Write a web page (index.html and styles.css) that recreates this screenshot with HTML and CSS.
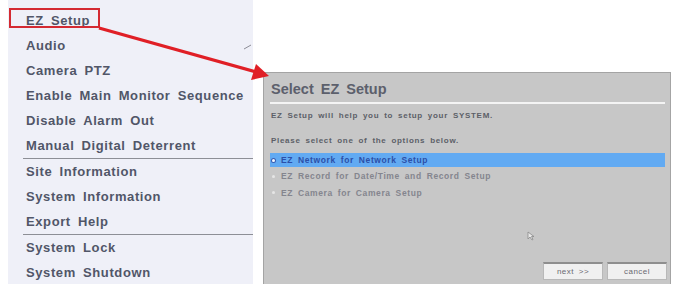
FILE: index.html
```html
<!DOCTYPE html>
<html>
<head>
<meta charset="utf-8">
<link rel="stylesheet" href="styles.css">
</head>
<body>
<div class="page">
  <nav class="menu">
    <div class="item">EZ Setup</div>
    <div class="item">Audio</div>
    <div class="item">Camera PTZ</div>
    <div class="item">Enable Main Monitor Sequence</div>
    <div class="item">Disable Alarm Out</div>
    <div class="item sep">Manual Digital Deterrent</div>
    <div class="item">Site Information</div>
    <div class="item">System Information</div>
    <div class="item sep">Export Help</div>
    <div class="item">System Lock</div>
    <div class="item">System Shutdown</div>
  </nav>
  <div class="stage">
    <section class="dialog">
      <h1 class="title">Select EZ Setup</h1>
      <div class="rule"></div>
      <p class="note">EZ Setup will help you to setup your SYSTEM.</p>
      <p class="note second">Please select one of the options below.</p>
      <ul class="options">
        <li class="opt active"><span class="dot"></span>EZ Network for Network Setup</li>
        <li class="opt"><span class="dot"></span>EZ Record for Date/Time and Record Setup</li>
        <li class="opt"><span class="dot"></span>EZ Camera for Camera Setup</li>
      </ul>
      <div class="buttons">
        <button class="btn">next &gt;&gt;</button>
        <button class="btn">cancel</button>
      </div>
      <svg class="cursor" width="8" height="10" viewBox="0 0 8 10"><path d="M1 1 L1 8 L3 6 L5 9 L6 8.5 L4.5 5.5 L7 5.5 Z" fill="#e8e8e8" stroke="#8a8a8a" stroke-width="0.8"/></svg>
    </section>
  </div>
  <svg class="annotation" width="673" height="284" viewBox="0 0 673 284">
    <rect x="10" y="9" width="89" height="18" fill="none" stroke="#d42a32" stroke-width="2"/>
    <line x1="99" y1="28" x2="256" y2="72" stroke="#e01f26" stroke-width="3.2"/>
    <polygon points="269,76 251,80 256,64" fill="#e01f26"/>
    <line x1="244" y1="49" x2="251" y2="45" stroke="#8c8c96" stroke-width="1"/>
  </svg>
</div>
</body>
</html>
```
FILE: styles.css
```css
html, body {
  margin: 0;
  padding: 0;
  background: #ffffff;
}
.page {
  position: relative;
  width: 673px;
  height: 284px;
  overflow: hidden;
  display: flex;
  font-family: "Liberation Sans", Arial, sans-serif;
}
.menu {
  margin-left: 8px;
  width: 245px;
  background: #eff0f8;
  padding-top: 8px;
  flex: none;
}
.item {
  height: 25px;
  line-height: 25px;
  padding-left: 18px;
  font-size: 13px;
  font-weight: bold;
  color: #515668;
  letter-spacing: 0.6px;
  word-spacing: 3px;
  white-space: nowrap;
}
.item.sep {
  border-bottom: 1px solid #8d8f96;
  margin-left: 15px;
  padding-left: 3px;
}
.stage {
  flex: 1;
  padding-top: 72px;
  padding-left: 10px;
}
.dialog {
  position: relative;
  height: 212px;
  width: 408px;
  background: #c7c7c7;
  border: 1px solid #a4a4a4;
  border-bottom: none;
  padding: 0 5px 0 6px;
  box-sizing: border-box;
}
.title {
  margin: 0;
  padding: 8px 0 0 1px;
  height: 20px;
  font-size: 14.5px;
  font-weight: bold;
  color: #5c606c;
  word-spacing: 3px;
  line-height: 17px;
}
.rule {
  height: 2px;
  background: #f4f4f4;
  margin-top: 1px;
}
.note {
  margin: 0;
  font-size: 8px;
  font-weight: bold;
  color: #5c5f68;
  letter-spacing: 0.7px;
  word-spacing: 2px;
  line-height: 10px;
  padding-left: 1px;
}
.note:first-of-type {
  margin-top: 7px;
}
.note.second {
  margin-top: 15px;
}
.options {
  list-style: none;
  margin: 7px 0 0 0;
  padding: 0;
}
.opt {
  display: flex;
  align-items: center;
  height: 15px;
  margin-bottom: 1.5px;
  font-size: 8.5px;
  font-weight: bold;
  color: #84858e;
  letter-spacing: 0.6px;
  word-spacing: 2px;
  padding-left: 2px;
}
.opt.active {
  background: #62aaf2;
  color: #2c4fa8;
  height: 14px;
}
.dot {
  width: 3px;
  height: 3px;
  border-radius: 50%;
  background: #e6e6e6;
  margin-right: 6px;
  flex: none;
}
.opt.active .dot {
  background: #f4f8ff;
  box-shadow: 0 0 0 1px #3b5db0;
}
.buttons {
  position: absolute;
  right: 3px;
  bottom: 4px;
  display: flex;
  gap: 4px;
}
.btn {
  width: 60px;
  height: 18px;
  padding: 0;
  background: #f0f0f0;
  border: 1px solid #b8b8b8;
  border-top: 2px solid #8e8e8e;
  font-family: "Liberation Sans", Arial, sans-serif;
  font-size: 8px;
  color: #6a6a72;
  letter-spacing: 0.5px;
  word-spacing: 2px;
}
.cursor {
  position: absolute;
  left: 263px;
  top: 158px;
}
.annotation {
  position: absolute;
  left: 0;
  top: 0;
  pointer-events: none;
}
```
